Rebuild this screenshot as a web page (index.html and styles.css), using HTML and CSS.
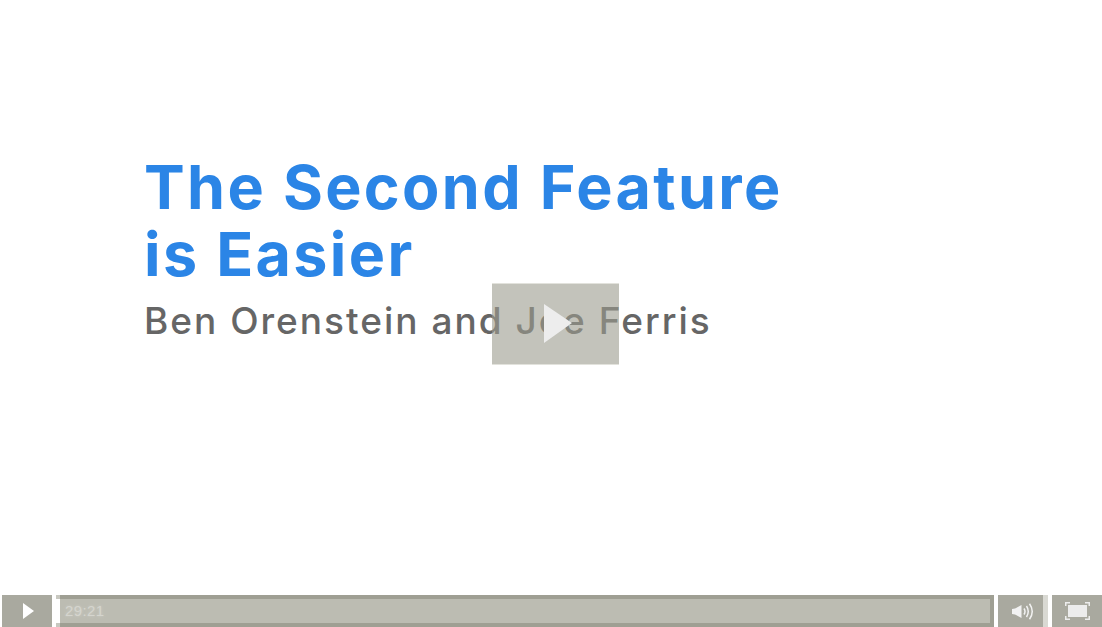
FILE: index.html
```html
<!DOCTYPE html>
<html lang="en">
<head>
<meta charset="utf-8">
<title>The Second Feature is Easier</title>
<link rel="stylesheet" href="styles.css">
</head>
<body>
<main class="player">
  <section class="slide">
    <h1 class="title">The Second Feature<br>is Easier</h1>
    <p class="authors">Ben Orenstein and Joe Ferris</p>
  </section>
  <div class="big-play">
    <svg width="127" height="79" viewBox="0 0 127 79"><path d="M52 20 L80 39 L52 59 Z" fill="#ededed"/></svg>
  </div>
  <div class="controls">
    <button class="btn play">
      <svg width="12" height="16" viewBox="0 0 12 16"><path d="M0 0 L11 8 L0 16 Z" fill="#fff"/></svg>
    </button>
    <div class="track">
      <div class="track-inner"><span class="time">29:21</span></div>
    </div>
    <button class="btn volume">
      <svg width="22" height="17" viewBox="0 0 22 17" fill="none">
        <path d="M0 6 L3 5.5 L9.5 2 V15 L3 11.5 L0 11 Z" fill="#f2f2f2"/>
        <path d="M12 5.5 Q14 8.5 12 11.5 M14.5 3 Q18 8.5 14.5 14 M17.5 .8 Q23 8.5 17.5 16.2" stroke="#f2f2f2" stroke-width="1.5"/>
      </svg>
    </button>
    <button class="btn full">
      <svg width="25" height="18" viewBox="0 0 25 18" fill="none">
        <rect x="3" y="3" width="19" height="12" fill="#ececec"/>
        <path d="M.75 4 V.75 H5 M20 .75 H24.25 V4 M24.25 14 V17.25 H20 M5 17.25 H.75 V14" stroke="#ececec" stroke-width="1.5"/>
      </svg>
    </button>
  </div>
</main>
</body>
</html>
```
FILE: styles.css
```css
* { box-sizing: border-box; }
html, body { margin: 0; height: 100%; background: #fff; overflow: hidden; }
.player {
  position: relative;
  width: 1102px;
  height: 627px;
  display: flex;
  flex-direction: column;
  font-family: Inter, "Liberation Sans", sans-serif;
}
.slide {
  flex: 1;
  padding: 154px 0 0 144px;
}
.title {
  margin: 0;
  font-size: 61px;
  line-height: 67px;
  font-weight: 700;
  letter-spacing: 2.35px;
  color: #2b85e6;
}
.authors {
  margin: 0;
  padding-top: 8px;
  font-size: 37px;
  line-height: 50px;
  font-weight: 500;
  letter-spacing: 2px;
  color: #666;
}
.big-play {
  position: absolute;
  left: 492px;
  top: 283px;
  width: 127px;
  height: 82px;
  background: rgba(155, 155, 142, 0.6);
  border-block: 1px solid #e2e2dc;
  background-clip: padding-box;
}
.big-play svg { display: block; }
.controls {
  height: 32px;
  display: flex;
  padding-left: 2px;
}
.btn {
  border: 0;
  padding: 0;
  display: flex;
  align-items: center;
  justify-content: center;
  background: #a9a99f;
}
.play { width: 50px; padding-left: 3px; }
.track {
  flex: none;
  width: 938px;
  margin-left: 4px;
  padding: 4px;
  background: linear-gradient(to right, #c8c8c0 0 4px, #9f9f93 4px);
  position: relative;
}
.track::before {
  content: "";
  position: absolute;
  left: 0;
  top: 4px;
  bottom: 4px;
  width: 4px;
  background: #fff;
}
.track-inner {
  height: 100%;
  display: flex;
  align-items: center;
  padding: 0 0 2px 5px;
  background: #bcbcb2;
}
.time {
  font-family: "Liberation Sans", sans-serif;
  font-size: 15px;
  letter-spacing: 0.4px;
  color: #d5d5ce;
  text-shadow: 0 0 3px #cfcfc8;
}
.volume {
  width: 50px;
  margin-left: 4px;
  border-right: 5px solid #d9d9d3;
  padding-left: 4px;
}
.full { width: 50px; margin-left: 4px; }
```
